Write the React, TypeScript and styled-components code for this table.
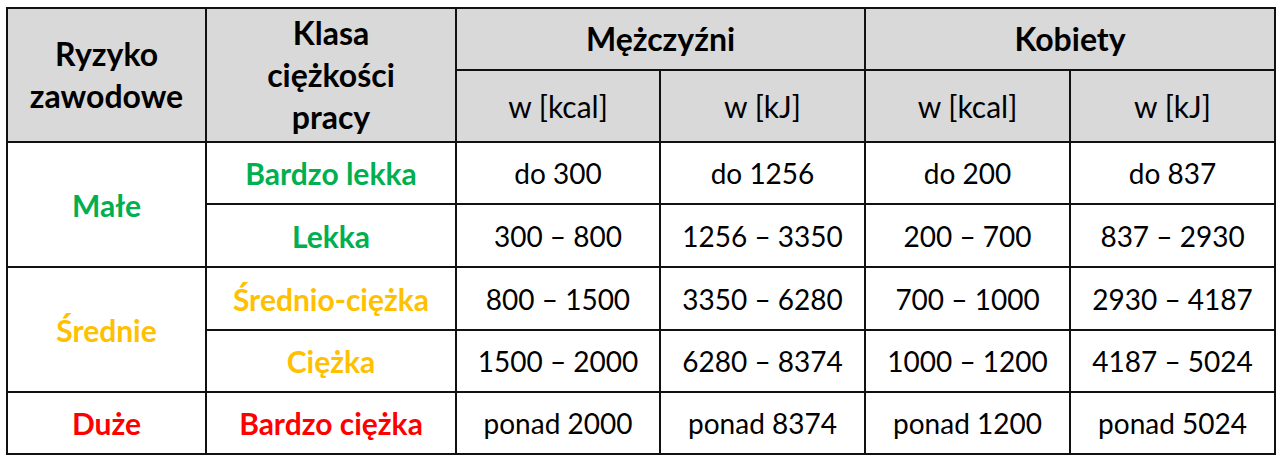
import React from 'react';
import styled, { createGlobalStyle } from 'styled-components';

type Tone = 'green' | 'yellow' | 'red' | 'plain';

const toneColor: Record<Tone, string> = {
  green: '#00b050',
  yellow: '#ffc000',
  red: '#ff0000',
  plain: '#000000',
};

const GlobalStyle = createGlobalStyle`
  html, body {
    margin: 0;
    padding: 0;
    background: #ffffff;
  }
  body {
    font-family: Lato, "Open Sans", "Liberation Sans", sans-serif;
  }
`;

const Page = styled.div`
  padding: 7px 0 0 6px;
`;

const Table = styled.table`
  width: 1268px;
  border-collapse: collapse;
  table-layout: fixed;
  border: 2px solid #111;
  color: #000;
`;

const Col = styled.col<{ $w: number }>`
  width: ${(p) => p.$w}px;
`;

const Row = styled.tr<{ $h: number }>`
  height: ${(p) => p.$h}px;
`;

const HeadCell = styled.th`
  background: #d9d9d9;
  border: 2px solid #111;
  padding: 0;
  text-align: center;
  vertical-align: middle;
  font-size: 32px;
  font-weight: 700;
  line-height: 42px;
`;

const UnitCell = styled(HeadCell)`
  font-size: 30px;
  font-weight: 400;
`;

const Cell = styled.td<{ $tone?: Tone }>`
  border: 2px solid #111;
  padding: 0;
  text-align: center;
  vertical-align: middle;
  font-size: ${(p) => (p.$tone && p.$tone !== 'plain' ? 30 : 28)}px;
  line-height: 34px;
  font-weight: ${(p) => (p.$tone && p.$tone !== 'plain' ? 700 : 400)};
  color: ${(p) => toneColor[p.$tone ?? 'plain']};
`;

interface IClassRow {
  risk?: { label: string; tone: Tone; span: number };
  name: string;
  tone: Tone;
  values: [string, string, string, string];
  height: number;
}

const rows: IClassRow[] = [
  {
    risk: { label: 'Małe', tone: 'green', span: 2 },
    name: 'Bardzo lekka',
    tone: 'green',
    values: ['do 300', 'do 1256', 'do 200', 'do 837'],
    height: 62,
  },
  {
    name: 'Lekka',
    tone: 'green',
    values: ['300 – 800', '1256 – 3350', '200 – 700', '837 – 2930'],
    height: 63,
  },
  {
    risk: { label: 'Średnie', tone: 'yellow', span: 2 },
    name: 'Średnio-ciężka',
    tone: 'yellow',
    values: ['800 – 1500', '3350 – 6280', '700 – 1000', '2930 – 4187'],
    height: 63,
  },
  {
    name: 'Ciężka',
    tone: 'yellow',
    values: ['1500 – 2000', '6280 – 8374', '1000 – 1200', '4187 – 5024'],
    height: 62,
  },
  {
    risk: { label: 'Duże', tone: 'red', span: 1 },
    name: 'Bardzo ciężka',
    tone: 'red',
    values: ['ponad 2000', 'ponad 8374', 'ponad 1200', 'ponad 5024'],
    height: 62,
  },
];

const App = () => (
  <Page>
    <GlobalStyle />
    <Table>
      <colgroup>
        <Col $w={199} />
        <Col $w={250} />
        <Col $w={204} />
        <Col $w={205} />
        <Col $w={205} />
        <Col $w={205} />
      </colgroup>
      <thead>
        <Row $h={62}>
          <HeadCell rowSpan={2}>
            Ryzyko
            <br />
            zawodowe
          </HeadCell>
          <HeadCell rowSpan={2}>
            Klasa
            <br />
            ciężkości
            <br />
            pracy
          </HeadCell>
          <HeadCell colSpan={2}>Mężczyźni</HeadCell>
          <HeadCell colSpan={2}>Kobiety</HeadCell>
        </Row>
        <Row $h={72}>
          <UnitCell>w [kcal]</UnitCell>
          <UnitCell>w [kJ]</UnitCell>
          <UnitCell>w [kcal]</UnitCell>
          <UnitCell>w [kJ]</UnitCell>
        </Row>
      </thead>
      <tbody>
        {rows.map((row) => (
          <Row $h={row.height} key={row.name}>
            {row.risk && (
              <Cell $tone={row.risk.tone} rowSpan={row.risk.span}>
                {row.risk.label}
              </Cell>
            )}
            <Cell $tone={row.tone}>{row.name}</Cell>
            {row.values.map((v, i) => (
              <Cell key={i}>{v}</Cell>
            ))}
          </Row>
        ))}
      </tbody>
    </Table>
  </Page>
);

export default App;
